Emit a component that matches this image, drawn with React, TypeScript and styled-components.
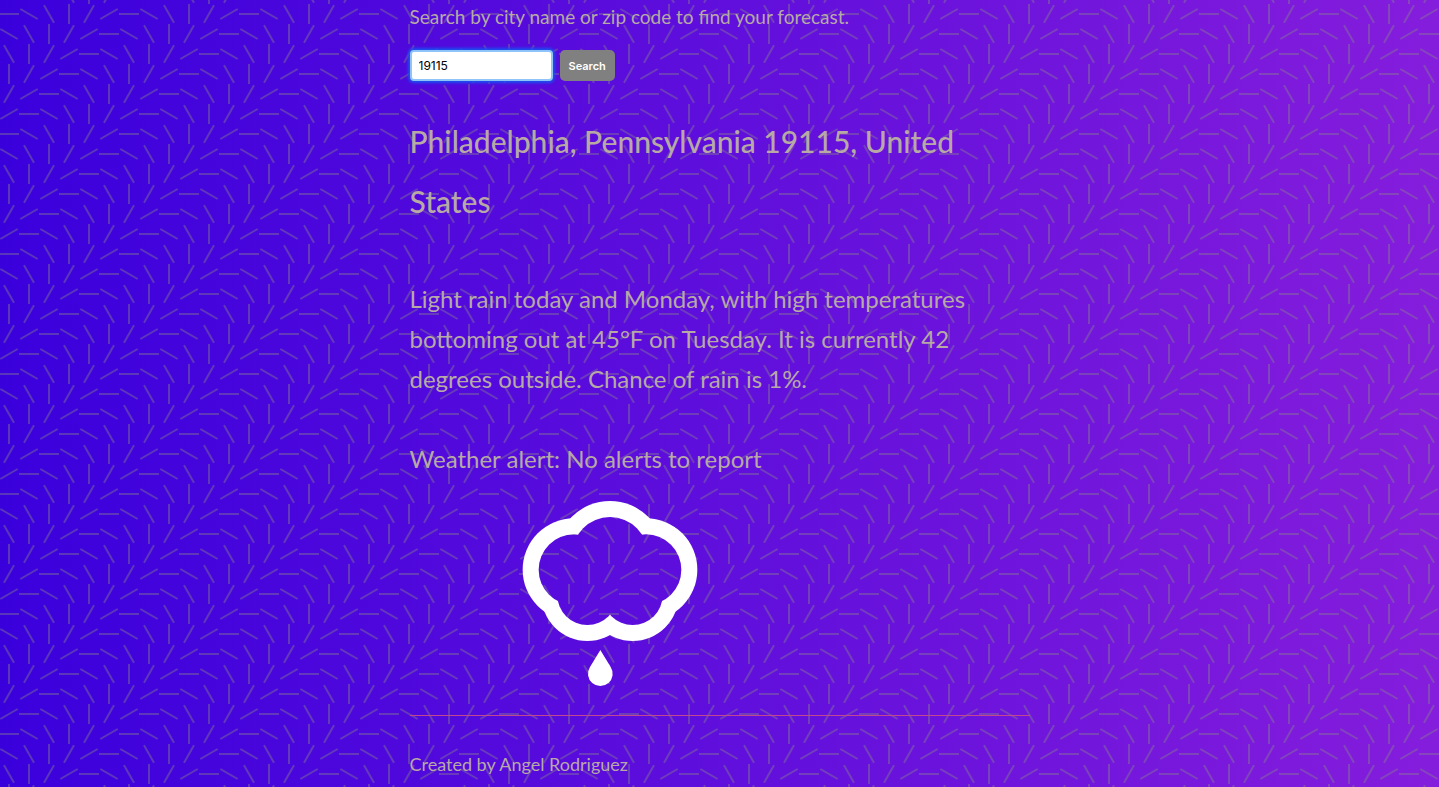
import React from "react";
import styled, { createGlobalStyle } from "styled-components";

const TILE = 120;
const CELL = 20;

const dashes = Array.from({ length: 36 }, (_, n) => {
  const col = n % 6;
  const row = Math.floor(n / 6);
  const angle = ((col + row) % 6) * 30;
  const cx = col * CELL + 10;
  const cy = row * CELL + 10;
  return `<path d="M${cx - 10} ${cy}h20" transform="rotate(${angle} ${cx} ${cy})"/>`;
}).join("");

const confetti = encodeURIComponent(
  `<svg xmlns="http://www.w3.org/2000/svg" width="${TILE}" height="${TILE}"><g stroke="#888888" stroke-opacity="0.4" stroke-width="2">${dashes}</g></svg>`
);

const GlobalStyle = createGlobalStyle`
  html {
    min-height: 100%;
    background-color: #3a00dc;
    background-image: url("data:image/svg+xml,${confetti}"),
      linear-gradient(90deg, #3a00dc 0%, #851ddc 100%);
    background-position: -1px 4px, 0 0;
    background-repeat: repeat, no-repeat;
  }
  body {
    margin: 0;
    color: #b8a9a5;
    font-family: Lato, "Open Sans", sans-serif;
  }
`;

const Page = styled.main`
  box-sizing: border-box;
  max-width: 660px;
  margin: 0 auto;
  padding: 0 20px;
`;

const Hint = styled.label`
  display: block;
  font-size: 19px;
  line-height: 34px;
`;

const SearchForm = styled.form`
  margin: 0;
`;

const SearchRow = styled.div`
  display: flex;
  gap: 7px;
  margin-top: 16px;
`;

const SearchInput = styled.input`
  box-sizing: border-box;
  width: 143px;
  height: 31px;
  padding: 0 7px;
  border: 2px solid #8fc4f8;
  border-radius: 4px;
  outline: none;
  background: #ffffff;
  box-shadow: 0 0 3px 2px #1a50f0;
  color: #000000;
  font: 12px Inter, sans-serif;
`;

const SearchButton = styled.button`
  height: 31px;
  padding: 0 9px;
  border: 0;
  border-radius: 5px;
  background: #808080;
  color: #ffffff;
  font: 600 11px Inter, sans-serif;
`;

const Place = styled.h1`
  margin: 30px 0 48px;
  font-size: 30px;
  font-weight: 500;
  line-height: 60px;
`;

const Report = styled.p`
  margin: 0 0 40px;
  font-size: 24px;
  line-height: 40px;
`;

const Alert = styled(Report)`
  margin-bottom: 16px;
`;

const Icon = styled.svg`
  display: block;
  width: 400px;
  max-width: 100%;
  height: 200px;
`;

const Footer = styled.footer`
  margin-top: 20px;
  padding-top: 32px;
  border-top: 1px solid #c04890;
  font-size: 18px;
  line-height: 32px;
`;

function RainIcon() {
  return (
    <Icon viewBox="-270 15 1200 600" role="img" aria-label="Rain">
      <mask id="cloud-ring" maskUnits="userSpaceOnUse" x="0" y="0" width="700" height="600">
        <g fill="#fff">
          <circle cx="222" cy="239" r="154" />
          <circle cx="438" cy="239" r="154" />
          <circle cx="330" cy="195" r="162" />
          <circle cx="262" cy="315" r="138" />
          <circle cx="398" cy="315" r="138" />
        </g>
        <g fill="#000">
          <circle cx="222" cy="239" r="106" />
          <circle cx="438" cy="239" r="106" />
          <circle cx="330" cy="195" r="114" />
          <circle cx="262" cy="315" r="90" />
          <circle cx="398" cy="315" r="90" />
        </g>
      </mask>
      <rect width="700" height="600" fill="#fff" mask="url(#cloud-ring)" />
      <path d="M301 480L332 531A37 37 0 1 1 270 531Z" fill="#fff" />
    </Icon>
  );
}

export default function App() {
  return (
    <>
      <GlobalStyle />
      <Page>
        <SearchForm onSubmit={(event) => event.preventDefault()}>
          <Hint htmlFor="location">Search by city name or zip code to find your forecast.</Hint>
          <SearchRow>
            <SearchInput id="location" type="text" defaultValue="19115" />
            <SearchButton type="submit">Search</SearchButton>
          </SearchRow>
        </SearchForm>
        <Place>Philadelphia, Pennsylvania 19115, United States</Place>
        <Report>
          Light rain today and Monday, with high temperatures bottoming out at 45°F on Tuesday. It
          is currently 42 degrees outside. Chance of rain is 1%.
        </Report>
        <Alert>Weather alert: No alerts to report</Alert>
        <RainIcon />
        <Footer>Created by Angel Rodriguez</Footer>
      </Page>
    </>
  );
}
